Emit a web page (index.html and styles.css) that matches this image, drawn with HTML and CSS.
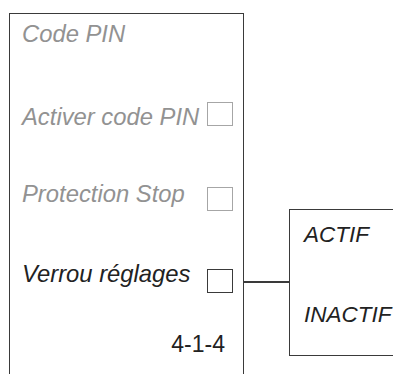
FILE: index.html
```html
<!DOCTYPE html>
<html>
<head>
    <title>Verrou réglages</title>
    <link rel="stylesheet" href="styles.css">
</head>
<body>
    <div id="diagram">
        <div id="menu-panel">
            <div class="menu-row row-title">
                <span class="label muted">Code PIN</span>
            </div>
            <div class="menu-row row-pin">
                <span class="label muted">Activer code PIN</span>
                <span class="check muted-check"></span>
            </div>
            <div class="menu-row row-stop">
                <span class="label muted">Protection Stop</span>
                <span class="check muted-check"></span>
            </div>
            <div class="menu-row row-lock">
                <span class="label">Verrou réglages</span>
                <span class="check"></span>
            </div>
            <div class="menu-ref">4-1-4</div>
        </div>
        <div id="connector"></div>
        <div id="option-panel">
            <div class="option option-on">ACTIF</div>
            <div class="option option-off">INACTIF</div>
        </div>
    </div>
</body>
</html>
```

FILE: styles.css
```css
/* Settings menu diagram */
body {
    margin: 0;
    background-color: #FFFFFF;
    font-family: 'Liberation Sans', Arial, sans-serif;
    color: #222222;
    overflow: hidden;
}

#diagram {
    display: flex;
    align-items: flex-start;
    width: 393px;
    height: 374px;
    overflow: hidden;
}

#menu-panel {
    flex: none;
    box-sizing: border-box;
    width: 235px;
    height: 400px;
    margin: 13px 0 0 9px;
    padding: 7px 10px 0 12px;
    border: 1.5px solid #3A3A3A;
    border-bottom: none;
}

.menu-row {
    display: flex;
    justify-content: space-between;
    align-items: flex-start;
}

.label {
    font-size: 23.8px;
    line-height: 26px;
    font-style: italic;
    white-space: nowrap;
}

.muted {
    color: #929292;
}

.check {
    flex: none;
    box-sizing: border-box;
    width: 26px;
    height: 24px;
    border: 1.5px solid #3A3A3A;
}

.muted-check {
    border-color: #A6A6A6;
}

.row-pin {
    margin-top: 55px;
}

.row-pin .label {
    margin-top: 2px;
}

.row-stop {
    margin-top: 51px;
}

.row-stop .check {
    margin-top: 6px;
}

.row-lock {
    margin-top: 50px;
}

.row-lock .check {
    margin-top: 8px;
}

.menu-ref {
    margin-top: 38px;
    padding-right: 8px;
    text-align: right;
    font-size: 23px;
    line-height: 26px;
}

#connector {
    flex: none;
    width: 45px;
    height: 1.5px;
    margin-top: 281px;
    background-color: #3A3A3A;
}

#option-panel {
    flex: none;
    box-sizing: border-box;
    width: 130px;
    height: 147px;
    margin-top: 209px;
    padding: 12px 0 0 14px;
    border: 1.5px solid #3A3A3A;
}

.option {
    font-size: 22.5px;
    line-height: 26px;
    font-style: italic;
    white-space: nowrap;
}

.option-off {
    margin-top: 54px;
}
```
